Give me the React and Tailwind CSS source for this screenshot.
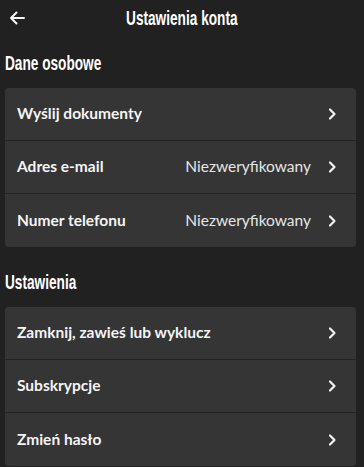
import React from 'react';

const HEAD = { fontFamily: '"Liberation Sans", Arial, sans-serif' };
const BODY = { fontFamily: 'Lato, "Noto Sans", sans-serif' };

const Chevron = () => (
  <svg width="10" height="14" viewBox="0 0 10 14" className="shrink-0">
    <path d="M3 2.5 L7.5 7 L3 11.5" fill="none" stroke="#f2f2f2" strokeWidth="2.2" strokeLinecap="round" strokeLinejoin="round" />
  </svg>
);

// condensed display heading (no Oswald offline, so squeeze Liberation Sans)
const Heading = ({ children, className = '' }) => (
  <span
    className={`inline-block align-top h-[28px] leading-[28px] text-[21px] font-bold text-white scale-x-[0.65] whitespace-nowrap ${className}`}
    style={HEAD}
  >
    {children}
  </span>
);

const Row = ({ label, value, last }) => (
  <div className={`flex items-center h-[53px] pl-3 pr-[19px] ${last ? '' : 'border-b border-[#232323]'}`}>
    <span className="flex-1 text-[15.5px] font-bold text-[#f4f4f4]">{label}</span>
    {value && <span className="text-[15.5px] text-[#e6e6e6] mr-[16px]">{value}</span>}
    <Chevron />
  </div>
);

const SECTIONS = [
  {
    title: 'Dane osobowe',
    rows: [
      { label: 'Wyślij dokumenty' },
      { label: 'Adres e-mail', value: 'Niezweryfikowany' },
      { label: 'Numer telefonu', value: 'Niezweryfikowany' },
    ],
  },
  {
    title: 'Ustawienia',
    rows: [
      { label: 'Zamknij, zawieś lub wyklucz' },
      { label: 'Subskrypcje' },
      { label: 'Zmień hasło' },
    ],
  },
];

export default function App() {
  return (
    <div className="w-[364px] h-[467px] bg-[#212121] overflow-hidden" style={BODY}>
      {/* Top bar */}
      <header className="relative flex items-center justify-center h-[35px]">
        <button className="absolute left-[8px] top-[9px]">
          <svg width="18" height="18" viewBox="0 0 18 18">
            <path d="M16 9 H3 M8.5 3.5 L3 9 L8.5 14.5" fill="none" stroke="#f5f5f5" strokeWidth="2" strokeLinecap="round" strokeLinejoin="round" />
          </svg>
        </button>
        <h1 className="h-[28px] flex justify-center"><Heading className="origin-center">Ustawienia konta</Heading></h1>
      </header>

      <main className="pl-[5px] pr-[8px]">
        {SECTIONS.map((s, i) => (
          <section key={s.title} className={i === 0 ? 'mt-[14px]' : 'mt-[21px]'}>
            <h2 className="h-[28px] mb-[11px]"><Heading className="origin-left">{s.title}</Heading></h2>
            <div className="bg-[#353535] rounded-[4px]">
              {s.rows.map((r, j) => (
                <Row key={r.label} {...r} last={j === s.rows.length - 1} />
              ))}
            </div>
          </section>
        ))}
      </main>
    </div>
  );
}
